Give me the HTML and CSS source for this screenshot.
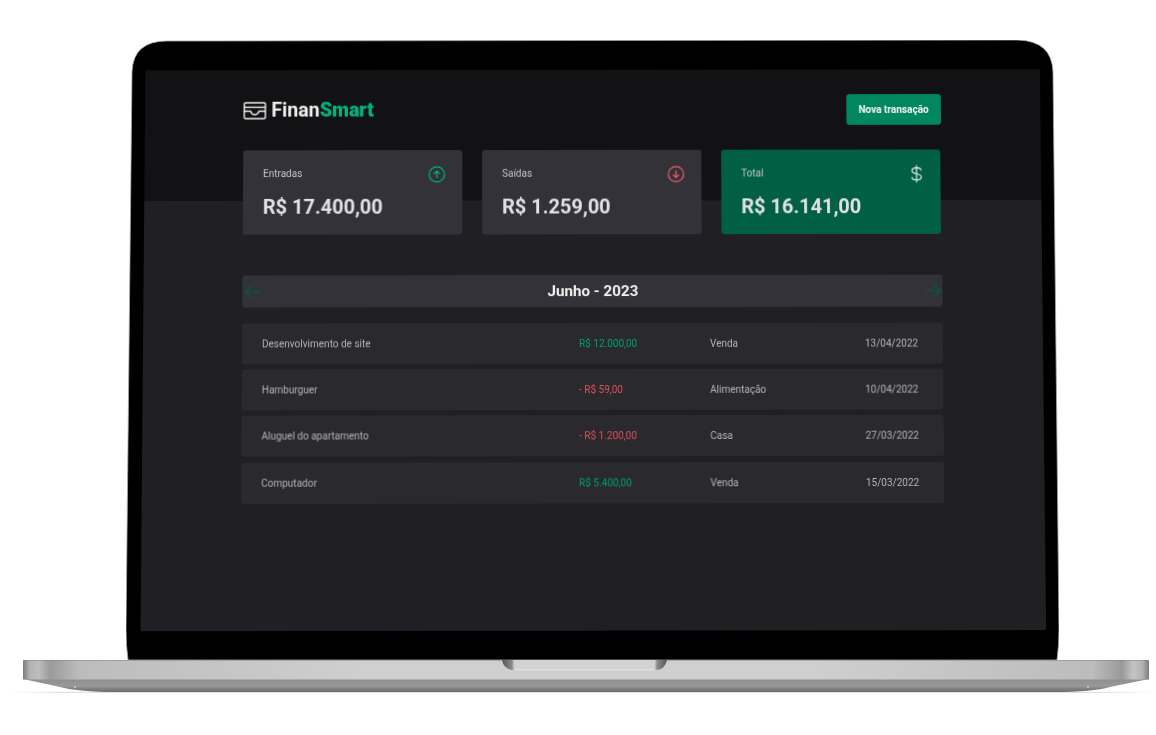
FILE: index.html
```html
<!DOCTYPE html>
<html lang="en">
<head>
    <meta charset="UTF-8">
    <title>FinanSmart</title>
    <link rel="stylesheet" href="styles.css">
</head>
<body>

    <div class="lid">
        <svg class="lid-shape" viewBox="126 40 933 620" width="933" height="620">
            <path d="M128 660Q126 645 126 630L132 72Q133 41 167 41L1018 40Q1052 41 1053 72L1059 630Q1059 645 1057 660Z" fill="#000" stroke="#a8a8a8" stroke-width=".8"/>
        </svg>

        <main class="screen">
            <header class="top">
                <div class="logo">
                    <svg width="23" height="20" viewBox="0 0 23 20" fill="none" stroke="#f2f2f2" stroke-width="1.4">
                        <rect x=".7" y="2" width="21.3" height="16" rx="1.5"/>
                        <path d="M.7 6.5H22"/>
                        <path d="M.7 10.5H7Q8.4 14 11.3 14T15.7 10.5H22"/>
                    </svg>
                    <span>Finan<b>Smart</b></span>
                </div>
                <button class="new-btn">Nova transação</button>
            </header>

            <section class="cards">
                <div class="card">
                    <div class="card-top">
                        <span>Entradas</span>
                        <svg width="19" height="19" viewBox="0 0 19 19" fill="none" stroke="#00b37e" stroke-width="1.2">
                            <circle cx="9.5" cy="9.5" r="7.7"/>
                            <path d="M9.5 13.2V6M6.5 9l3-3 3 3"/>
                        </svg>
                    </div>
                    <strong>R$ 17.400,00</strong>
                </div>
                <div class="card">
                    <div class="card-top">
                        <span>Saídas</span>
                        <svg width="19" height="19" viewBox="0 0 19 19" fill="none" stroke="#f75a68" stroke-width="1.2">
                            <circle cx="9.5" cy="9.5" r="7.7"/>
                            <path d="M9.5 5.8V13M6.5 10l3 3 3-3"/>
                        </svg>
                    </div>
                    <strong>R$ 1.259,00</strong>
                </div>
                <div class="card total">
                    <div class="card-top">
                        <span>Total</span>
                        <svg width="19" height="19" viewBox="-1.5 0 19 19" fill="none" stroke="#f5f5f5" stroke-width="1.1">
                            <path d="M9.5 .8V18.2M14 6.2C14 4 12 3.4 9.5 3.4 7 3.4 5 4.4 5 6.4 5 8.6 7 9 9.5 9.5 12 10 14.2 10.6 14.2 12.8 14.2 15 12 15.8 9.5 15.8 7 15.8 4.8 15 4.8 12.8"/>
                        </svg>
                    </div>
                    <strong>R$ 16.141,00</strong>
                </div>
            </section>

            <nav class="month">
                <svg width="18" height="14" viewBox="0 0 18 14" fill="none" stroke="#015f43" stroke-width="1.2">
                    <path d="M16.5 7H1.5M7.5 1l-6 6 6 6"/>
                </svg>
                <span>Junho - 2023</span>
                <svg width="18" height="14" viewBox="0 0 18 14" fill="none" stroke="#015f43" stroke-width="1.2">
                    <path d="M1.5 7H16.5M10.5 1l6 6-6 6"/>
                </svg>
            </nav>

            <section class="rows">
                <div class="row">
                    <span>Desenvolvimento de site</span>
                    <span class="income">R$ 12.000,00</span>
                    <span>Venda</span>
                    <span>13/04/2022</span>
                </div>
                <div class="row">
                    <span>Hamburguer</span>
                    <span class="outcome">- R$ 59,00</span>
                    <span>Alimentação</span>
                    <span>10/04/2022</span>
                </div>
                <div class="row">
                    <span>Aluguel do apartamento</span>
                    <span class="outcome">- R$ 1.200,00</span>
                    <span>Casa</span>
                    <span>27/03/2022</span>
                </div>
                <div class="row">
                    <span>Computador</span>
                    <span class="income">R$ 5.400,00</span>
                    <span>Venda</span>
                    <span>15/03/2022</span>
                </div>
            </section>
        </main>
    </div>

    <svg class="base" viewBox="0 660 1156 40" width="1156" height="40">
        <defs>
            <linearGradient id="deck" x1="23" x2="1149" y1="0" y2="0" gradientUnits="userSpaceOnUse">
                <stop offset="0" stop-color="#7c7c7c"/>
                <stop offset=".006" stop-color="#b4b4b4"/>
                <stop offset=".014" stop-color="#bdbdbd"/>
                <stop offset=".024" stop-color="#9a9a9a"/>
                <stop offset=".05" stop-color="#bcbcbc"/>
                <stop offset=".3" stop-color="#cfcfcf"/>
                <stop offset=".7" stop-color="#cfcfcf"/>
                <stop offset=".95" stop-color="#bcbcbc"/>
                <stop offset=".976" stop-color="#9a9a9a"/>
                <stop offset=".986" stop-color="#c4c4c4"/>
                <stop offset=".994" stop-color="#b4b4b4"/>
                <stop offset="1" stop-color="#7c7c7c"/>
            </linearGradient>
            <linearGradient id="front" x1="0" x2="0" y1="679" y2="692" gradientUnits="userSpaceOnUse">
                <stop offset="0" stop-color="#8e8e8e"/>
                <stop offset=".55" stop-color="#9a9a9a"/>
                <stop offset=".7" stop-color="#858585"/>
                <stop offset="1" stop-color="#6d6d6d"/>
            </linearGradient>
            <linearGradient id="notch" x1="502" x2="667" y1="0" y2="0" gradientUnits="userSpaceOnUse">
                <stop offset="0" stop-color="#555"/>
                <stop offset=".06" stop-color="#8a8a8a"/>
                <stop offset=".075" stop-color="#d2d2d2"/>
                <stop offset=".925" stop-color="#d2d2d2"/>
                <stop offset=".94" stop-color="#8a8a8a"/>
                <stop offset="1" stop-color="#555"/>
            </linearGradient>
            <linearGradient id="shadow" x1="8" x2="1156" y1="0" y2="0" gradientUnits="userSpaceOnUse">
                <stop offset="0" stop-color="#fff"/>
                <stop offset=".05" stop-color="#d8d8d8"/>
                <stop offset=".95" stop-color="#d8d8d8"/>
                <stop offset="1" stop-color="#fff"/>
            </linearGradient>
        </defs>
        <path d="M8 692.3H1156" stroke="url(#shadow)" stroke-width="1"/>
        <path d="M23 679L60 687Q80 692 115 692H1055Q1092 692 1110 687L1149 679Z" fill="url(#front)"/>
        <path d="M23 661Q23 660 25 660H1147Q1149 660 1149 661V679.5H23Z" fill="url(#deck)"/>
        <path d="M23 660H1149" stroke="#777" stroke-width=".8"/>
        <path d="M502 660H667Q665 670 655 670H514Q504 670 502 660Z" fill="url(#notch)"/>
        <path d="M515 669.8H654" stroke="#eee" stroke-width=".8"/>
        <circle cx="75" cy="687" r="1" fill="#ccc"/>
        <circle cx="1088" cy="687" r="1" fill="#ccc"/>
    </svg>

</body>
</html>
```

FILE: styles.css
```css
body {
    margin: 0;
    width: 1156px;
    height: 735px;
    overflow: hidden;
    background: #fff;
    font-family: Roboto, sans-serif;
}

/* laptop lid and screen */
.lid {
    position: relative;
    width: 933px;
    height: 620px;
    margin: 40px 0 0 126px;
    padding-top: 27.5px;
    box-sizing: border-box;
}
.lid-shape {
    position: absolute;
    top: 0;
    left: 0;
}
.screen {
    position: relative;
    width: 701px;
    height: 561px;
    margin-left: 16.5px;
    padding: 0 100px 0 99px;
    background: linear-gradient(#121214 132px, #202024 132px);
    transform: perspective(1000px) rotateX(1.25deg) rotate(-0.07deg);
    filter: blur(0.5px);
}

/* header */
.top {
    display: flex;
    justify-content: space-between;
    align-items: center;
    height: 31px;
    padding-top: 25px;
}
.logo {
    display: flex;
    align-items: center;
    gap: 5px;
    font-size: 19.7px;
    font-weight: 700;
    color: #f0f0f0;
}
.logo b {
    color: #00b37e;
}
.new-btn {
    width: 95px;
    height: 31px;
    padding: 0;
    background: #00875f;
    color: #f5f5f5;
    border: none;
    border-radius: 3px;
    font-family: inherit;
    font-size: 10.1px;
    font-weight: 700;
}

/* summary cards */
.cards {
    display: grid;
    grid-template-columns: repeat(3, 220px);
    gap: 20px;
    margin-top: 25px;
}
.card {
    height: 85px;
    padding: 13px 16px 0 20px;
    box-sizing: border-box;
    background: #323238;
    border-radius: 3px;
    color: #c4c4cc;
}
.card.total {
    background: #015f43;
}
.card-top {
    display: flex;
    justify-content: space-between;
    align-items: center;
    font-size: 10px;
    height: 20px;
}
.card-top svg {
    margin-top: 3px;
}
.card strong {
    display: block;
    margin-top: 11.5px;
    font-size: 20px;
    font-weight: 700;
    color: #e1e1e6;
}

/* month switcher */
.month {
    display: flex;
    justify-content: space-between;
    align-items: center;
    height: 32px;
    margin-top: 41px;
    padding: 0 1px 0 2px;
    background: #323238;
    border-radius: 3px;
    font-size: 15.2px;
    font-weight: 700;
    color: #f0f0f0;
}

/* transactions */
.rows {
    display: flex;
    flex-direction: column;
    gap: 5.3px;
    margin-top: 15.8px;
}
.row {
    display: grid;
    grid-template-columns: 317px 131px 155px auto;
    align-items: center;
    height: 41px;
    padding: 0 23px 0 20px;
    background: #29292e;
    border-radius: 3px;
    font-size: 10px;
    color: #b4b4ba;
}
.income {
    color: #00a070;
}
.outcome {
    color: #e0505e;
}

/* laptop base */
.base {
    display: block;
}
```
